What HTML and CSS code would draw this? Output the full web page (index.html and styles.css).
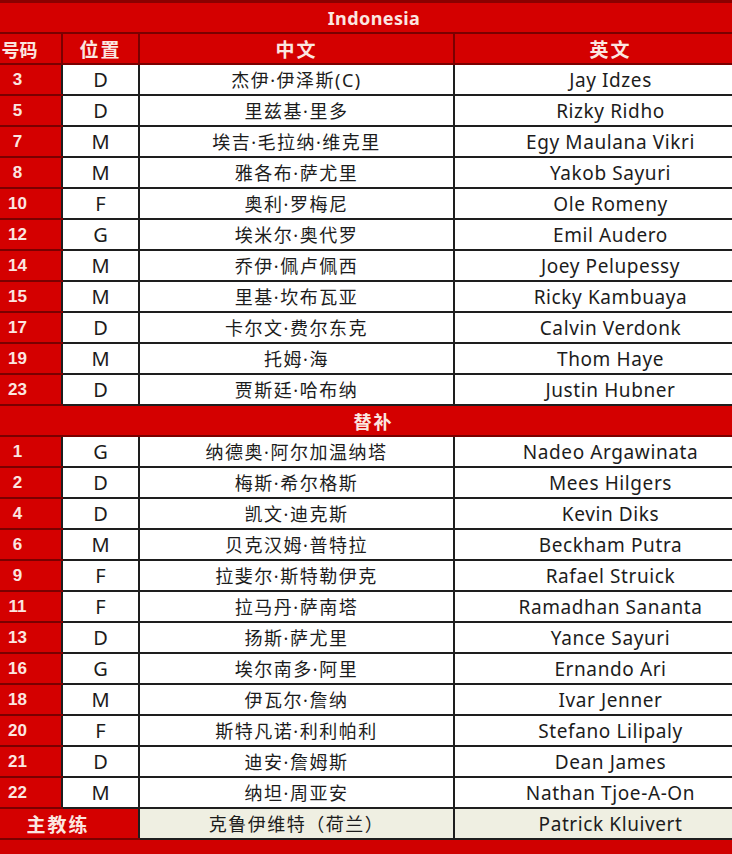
FILE: index.html
```html
<!DOCTYPE html>
<html lang="zh">
<head>
<meta charset="utf-8">
<title>Indonesia</title>
<link rel="stylesheet" href="styles.css">
</head>
<body>
<div class="sheet">
<table class="roster">
  <colgroup>
    <col class="c-num"><col class="c-pos"><col class="c-cn"><col class="c-en">
  </colgroup>
  <tr class="title"><td colspan="4">Indonesia</td></tr>
  <tr class="head"><td class="num">号码</td><td>位置</td><td>中文</td><td class="en">英文</td></tr>
  <tr><td class="num">3</td><td class="pos">D</td><td class="cn">杰伊·伊泽斯(C)</td><td class="en">Jay Idzes</td></tr>
  <tr><td class="num">5</td><td class="pos">D</td><td class="cn">里兹基·里多</td><td class="en">Rizky Ridho</td></tr>
  <tr><td class="num">7</td><td class="pos">M</td><td class="cn">埃吉·毛拉纳·维克里</td><td class="en">Egy Maulana Vikri</td></tr>
  <tr><td class="num">8</td><td class="pos">M</td><td class="cn">雅各布·萨尤里</td><td class="en">Yakob Sayuri</td></tr>
  <tr><td class="num">10</td><td class="pos">F</td><td class="cn">奥利·罗梅尼</td><td class="en">Ole Romeny</td></tr>
  <tr><td class="num">12</td><td class="pos">G</td><td class="cn">埃米尔·奥代罗</td><td class="en">Emil Audero</td></tr>
  <tr><td class="num">14</td><td class="pos">M</td><td class="cn">乔伊·佩卢佩西</td><td class="en">Joey Pelupessy</td></tr>
  <tr><td class="num">15</td><td class="pos">M</td><td class="cn">里基·坎布瓦亚</td><td class="en">Ricky Kambuaya</td></tr>
  <tr><td class="num">17</td><td class="pos">D</td><td class="cn">卡尔文·费尔东克</td><td class="en">Calvin Verdonk</td></tr>
  <tr><td class="num">19</td><td class="pos">M</td><td class="cn">托姆·海</td><td class="en">Thom Haye</td></tr>
  <tr><td class="num">23</td><td class="pos">D</td><td class="cn">贾斯廷·哈布纳</td><td class="en">Justin Hubner</td></tr>
  <tr class="sub"><td colspan="4">替补</td></tr>
  <tr><td class="num">1</td><td class="pos">G</td><td class="cn">纳德奥·阿尔加温纳塔</td><td class="en">Nadeo Argawinata</td></tr>
  <tr><td class="num">2</td><td class="pos">D</td><td class="cn">梅斯·希尔格斯</td><td class="en">Mees Hilgers</td></tr>
  <tr><td class="num">4</td><td class="pos">D</td><td class="cn">凯文·迪克斯</td><td class="en">Kevin Diks</td></tr>
  <tr><td class="num">6</td><td class="pos">M</td><td class="cn">贝克汉姆·普特拉</td><td class="en">Beckham Putra</td></tr>
  <tr><td class="num">9</td><td class="pos">F</td><td class="cn">拉斐尔·斯特勒伊克</td><td class="en">Rafael Struick</td></tr>
  <tr><td class="num">11</td><td class="pos">F</td><td class="cn">拉马丹·萨南塔</td><td class="en">Ramadhan Sananta</td></tr>
  <tr><td class="num">13</td><td class="pos">D</td><td class="cn">扬斯·萨尤里</td><td class="en">Yance Sayuri</td></tr>
  <tr><td class="num">16</td><td class="pos">G</td><td class="cn">埃尔南多·阿里</td><td class="en">Ernando Ari</td></tr>
  <tr><td class="num">18</td><td class="pos">M</td><td class="cn">伊瓦尔·詹纳</td><td class="en">Ivar Jenner</td></tr>
  <tr><td class="num">20</td><td class="pos">F</td><td class="cn">斯特凡诺·利利帕利</td><td class="en">Stefano Lilipaly</td></tr>
  <tr><td class="num">21</td><td class="pos">D</td><td class="cn">迪安·詹姆斯</td><td class="en">Dean James</td></tr>
  <tr><td class="num">22</td><td class="pos">M</td><td class="cn">纳坦·周亚安</td><td class="en">Nathan Tjoe-A-On</td></tr>
  <tr class="coach"><td colspan="2" class="coach-label">主教练</td><td class="cn">克鲁伊维特（荷兰）</td><td class="en">Patrick Kluivert</td></tr>
</table>
</div>
</body>
</html>
```

FILE: styles.css
```css
html, body {
  margin: 0;
  padding: 0;
  background: #d00000;
}
.sheet {
  width: 732px;
  height: 854px;
  overflow: hidden;
  background: #d00000;
  border-top: 3px solid #8a0000;
  box-sizing: border-box;
}
.roster {
  border-collapse: collapse;
  table-layout: fixed;
  width: 766px;
  font-family: "Noto Sans", "Noto Sans CJK SC", sans-serif;
  font-size: 19px;
  color: #1c1c1c;
}
.c-num { width: 62px; }
.c-pos { width: 77px; }
.c-cn { width: 315px; }
.c-en { width: 312px; }
.roster td {
  height: 29px;
  padding: 0;
  text-align: center;
  vertical-align: middle;
  background: #fff;
  border: 2px solid #1e1e1e;
  line-height: 20px;
  white-space: nowrap;
  overflow: hidden;
}
.roster td.cn {
  font-family: "Noto Sans", "Noto Sans CJK SC", sans-serif;
  font-size: 18px;
  letter-spacing: 1.5px;
}
.roster td.en {
  letter-spacing: 0.6px;
  border-right: none;
}
.roster td.pos {
  font-size: 20px;
}
.roster .title td {
  height: 29px;
  background: #d40000;
  color: #fbe6e0;
  font-weight: 700;
  font-size: 18px;
  letter-spacing: 0.4px;
  border: none;
  border-bottom: 2px solid #7a0000;
  padding-right: 18px;
}
.roster .head td {
  height: 29px;
  background: #d40000;
  color: #fbe6e0;
  font-family: "Noto Sans CJK SC", sans-serif;
  font-weight: 700;
  font-size: 19px;
  letter-spacing: 2px;
  border-color: #7a0000;
}
.roster td.num {
  background: #d40000;
  color: #fbe6e0;
  font-family: "Liberation Sans", "Noto Sans CJK SC", sans-serif;
  font-weight: 700;
  font-size: 17px;
  border-left: none;
  border-color: #7a0000;
  border-right-color: #1e1e1e;
  padding-right: 26px;
}
.roster .head td.num {
  border-right-color: #7a0000;
  padding-right: 22px;
  font-family: "Noto Sans CJK SC", sans-serif;
  font-size: 18px;
  letter-spacing: 0;
}
.roster .sub td {
  background: #d40000;
  color: #fbe6e0;
  font-family: "Noto Sans CJK SC", sans-serif;
  font-weight: 700;
  font-size: 18px;
  letter-spacing: 2px;
  border-color: #7a0000;
  border-left: none;
  padding-right: 18px;
}
.roster .coach td {
  background: #efefe2;
}
.roster .coach td.coach-label {
  background: #d40000;
  color: #fbe6e0;
  font-family: "Noto Sans CJK SC", sans-serif;
  font-weight: 700;
  font-size: 19px;
  letter-spacing: 2px;
  border-left: none;
  border-color: #7a0000;
  border-right-color: #1e1e1e;
  border-bottom-color: #7a0000;
  padding-right: 22px;
}
```
